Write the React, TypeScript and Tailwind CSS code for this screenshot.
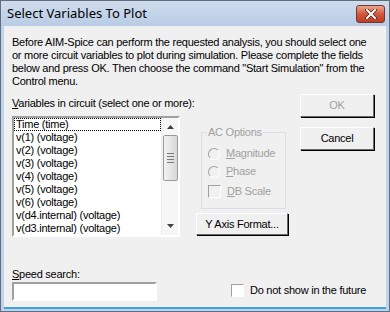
const items = [
  'Time (time)',
  'v(1) (voltage)',
  'v(2) (voltage)',
  'v(3) (voltage)',
  'v(4) (voltage)',
  'v(5) (voltage)',
  'v(6) (voltage)',
  'v(d4.internal) (voltage)',
  'v(d3.internal) (voltage)',
];

const raised =
  'border border-t-white border-l-white border-r-[#696969] border-b-[#696969] shadow-[1px_1px_0_0_#000]';

const sunken = 'border-2 border-t-[#a0a0a0] border-l-[#a0a0a0] border-r-white border-b-white';

const Radio = ({ label, u }: { label: string; u: string }) => (
  <div className="flex items-center gap-[6px] h-[13px] text-[#a0a0a0]">
    <span className="w-[12px] h-[12px] rounded-full border border-[#a0a0a0] bg-[#f0f0f0] border-b-white border-r-white" />
    <span>
      <span className="underline">{u}</span>
      {label.slice(1)}
    </span>
  </div>
);

export default function App() {
  return (
    <div
      className="w-[390px] h-[312px] bg-[#c0d3ea] border border-[#5f6f80] flex flex-col text-[11px] leading-[13px] tracking-[-0.25px] text-black"
      style={{ fontFamily: '"Liberation Sans", Arial, sans-serif' }}
    >
      {/* title bar */}
      <div className="h-[25px] flex items-center justify-between pl-[6px] pr-[4px] bg-gradient-to-b from-[#cfdcec] to-[#b9cce5]">
        <span className="text-[13px] tracking-normal text-black" style={{ fontFamily: '"Noto Sans", sans-serif' }}>
          Select Variables To Plot
        </span>
        <div className="w-[29px] h-[18px] rounded-[3px] border border-[#6d3a34] bg-gradient-to-b from-[#eda58f] via-[#d0583c] to-[#c03c22] flex items-center justify-center">
          <svg width="12" height="10" viewBox="0 0 12 10">
            <path d="M2 1 L10 9 M10 1 L2 9" stroke="#4a2018" strokeWidth="3.4" strokeLinecap="square" />
            <path d="M2 1 L10 9 M10 1 L2 9" stroke="#fff" strokeWidth="2" strokeLinecap="square" />
          </svg>
        </div>
      </div>

      {/* client */}
      <div className="flex-1 mx-[3px] mb-[2px] bg-[#f0f0f0] border-b-[2px] border-[#3aa3e0] flex flex-col pl-[8px] pr-[12px] pt-[10px]">
        <p className="whitespace-nowrap">
          Before AIM-Spice can perform the requested analysis, you should select one
          <br />
          or more circuit variables to plot during simulation. Please complete the fields
          <br />
          below and press OK. Then choose the command "Start Simulation" from the
          <br />
          Control menu.
        </p>

        <div className="flex mt-[6px]">
          {/* list column */}
          <div className="flex flex-col w-[168px]">
            <div className="mt-[3px] whitespace-nowrap">
              <span className="underline">V</span>ariables in circuit (select one or more):
            </div>
            <div className={`mt-[6px] h-[121px] bg-white flex ${sunken}`}>
              <div className="flex-1 flex flex-col">
                {items.map((it, i) => (
                  <div
                    key={it}
                    className={`h-[13px] pl-[2px] whitespace-nowrap ${i === 0 ? 'outline outline-1 outline-dotted outline-black -outline-offset-1' : ''}`}
                  >
                    {it}
                  </div>
                ))}
              </div>
              <div className="w-[17px] bg-[#f6f6f6] border-l border-[#ececec] flex flex-col items-center">
                <svg width="7" height="4" viewBox="0 0 7 4" className="mt-[7px]">
                  <path d="M0 4 L3.5 0 L7 4 Z" fill="#404040" />
                </svg>
                <div className="mt-[6px] w-[15px] h-[46px] rounded-[2px] border border-[#9a9a9a] bg-gradient-to-r from-[#f2f2f2] to-[#d8d8d8] flex flex-col items-center justify-center gap-[2px]">
                  <span className="w-[7px] h-px bg-[#7a7a7a]" />
                  <span className="w-[7px] h-px bg-[#7a7a7a]" />
                  <span className="w-[7px] h-px bg-[#7a7a7a]" />
                  <span className="w-[7px] h-px bg-[#7a7a7a]" />
                </div>
                <div className="flex-1" />
                <svg width="7" height="4" viewBox="0 0 7 4" className="mb-[7px]">
                  <path d="M0 0 L3.5 4 L7 0 Z" fill="#404040" />
                </svg>
              </div>
            </div>
          </div>

          {/* middle column */}
          <div className="flex flex-col ml-[16px] w-[93px] pt-[38px]">
            <div className="ml-[5px] w-[85px] h-[77px] border border-[#d5dfe5] relative pl-[6px] pt-[14px] flex flex-col gap-[5px]">
              <span className="absolute -top-[7px] left-[5px] px-[1px] bg-[#f0f0f0] text-[#a0a0a0]">AC Options</span>
              <Radio label="Magnitude" u="M" />
              <Radio label="Phase" u="P" />
              <div className="flex items-center gap-[6px] h-[13px] mt-[2px] text-[#a0a0a0]">
                <span className="w-[13px] h-[13px] border border-[#a0a0a0] border-b-white border-r-white bg-[#f0f0f0]" />
                <span>
                  <span className="underline">D</span>B Scale
                </span>
              </div>
            </div>
            <button className={`mt-[4px] w-[92px] h-[22px] bg-[#f0f0f0] ${raised}`}>Y Axis Format...</button>
          </div>

          {/* right column */}
          <div className="flex flex-col ml-[12px] gap-[10px]">
            <button className={`w-[74px] h-[23px] bg-[#f0f0f0] text-[#a0a0a0] ${raised}`}>OK</button>
            <button className={`w-[74px] h-[23px] bg-[#f0f0f0] ${raised}`}>Cancel</button>
          </div>
        </div>

        <div className="flex items-end mt-[31px]">
          <div className="flex flex-col">
            <div>
              <span className="underline">S</span>peed search:
            </div>
            <div className={`mt-[1px] w-[145px] h-[19px] bg-white ${sunken}`} />
          </div>
          <div className="flex items-center ml-[74px] mb-[4px] gap-[6px]">
            <span className="w-[13px] h-[13px] bg-white border border-[#a0a0a0] border-b-white border-r-white" />
            <span>Do not show in the future</span>
          </div>
        </div>
      </div>
    </div>
  );
}
